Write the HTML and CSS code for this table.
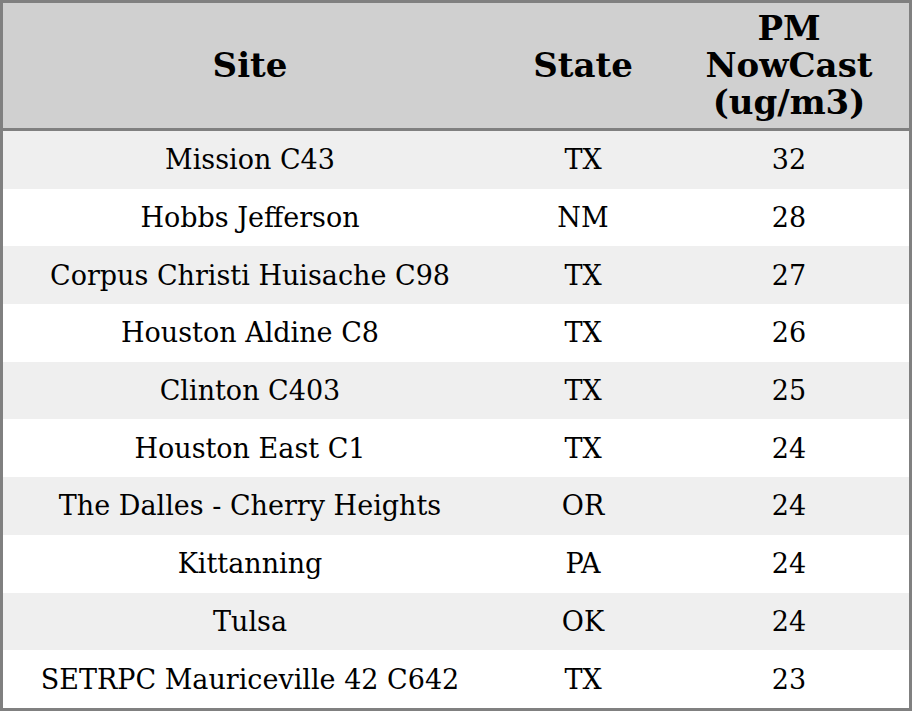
FILE: index.html
```html
<!DOCTYPE html>
<html>
<head>
<meta charset="utf-8">
<link rel="stylesheet" href="styles.css">
</head>
<body>
<table class="aq">
  <colgroup>
    <col class="c-site">
    <col class="c-state">
    <col class="c-pm">
  </colgroup>
  <thead>
    <tr><th>Site</th><th>State</th><th>PM<br>NowCast<br>(ug/m3)</th></tr>
  </thead>
  <tbody>
    <tr><td>Mission C43</td><td>TX</td><td>32</td></tr>
    <tr><td>Hobbs Jefferson</td><td>NM</td><td>28</td></tr>
    <tr><td>Corpus Christi Huisache C98</td><td>TX</td><td>27</td></tr>
    <tr><td>Houston Aldine C8</td><td>TX</td><td>26</td></tr>
    <tr><td>Clinton C403</td><td>TX</td><td>25</td></tr>
    <tr><td>Houston East C1</td><td>TX</td><td>24</td></tr>
    <tr><td>The Dalles - Cherry Heights</td><td>OR</td><td>24</td></tr>
    <tr><td>Kittanning</td><td>PA</td><td>24</td></tr>
    <tr><td>Tulsa</td><td>OK</td><td>24</td></tr>
    <tr><td>SETRPC Mauriceville 42 C642</td><td>TX</td><td>23</td></tr>
  </tbody>
</table>
</body>
</html>
```
FILE: styles.css
```css
html, body {
  margin: 0;
  padding: 0;
  background: #ffffff;
}
.aq {
  width: 912px;
  height: 711px;
  border-collapse: separate;
  border-spacing: 0;
  border: 3px solid #808080;
  box-sizing: border-box;
  font-family: "DejaVu Serif", serif;
  color: #000;
  table-layout: fixed;
}
.c-site { width: 494px; }
.c-state { width: 172px; }
.c-pm { width: 240px; }
.aq th {
  background: #d0d0d0;
  font-size: 34px;
  font-weight: bold;
  line-height: 37px;
  height: 128px;
  box-sizing: border-box;
  padding: 0;
  text-align: center;
  vertical-align: middle;
  border-bottom: 3px solid #808080;
}
.aq td {
  font-size: 27px;
  padding: 0;
  text-align: center;
  vertical-align: middle;
}
.aq tbody tr:nth-child(odd) td {
  background: #efefef;
}
```
